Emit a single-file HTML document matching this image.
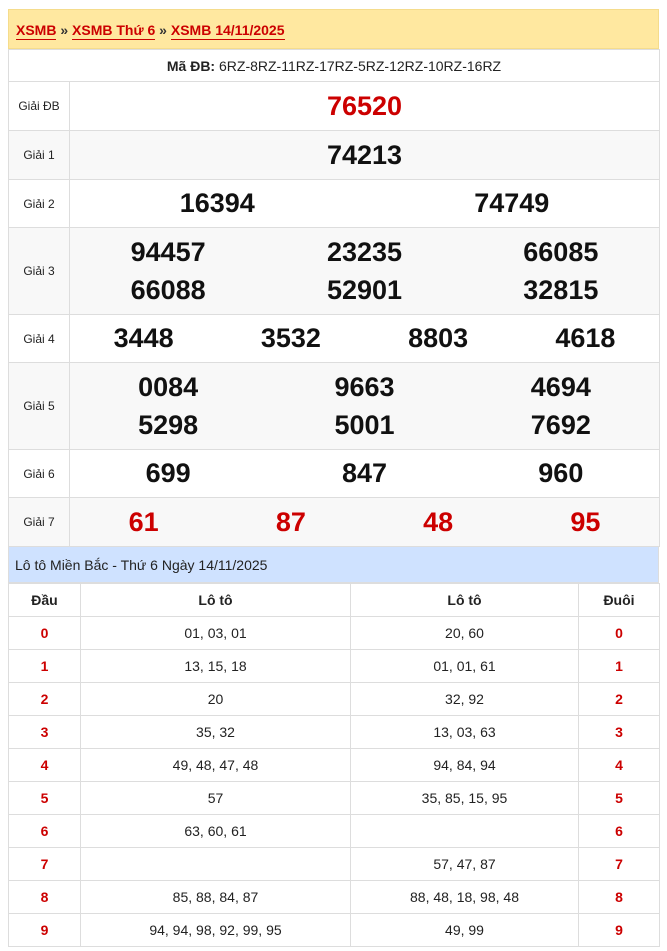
<!DOCTYPE html>
<html><head><meta charset="utf-8"><style>
body{margin:0;background:#fff;font-family:"Liberation Sans",Arial,sans-serif;}
.wrap{position:absolute;left:8px;top:9px;width:651px;}
.hd{height:40px;background:#ffe8a0;border:1px solid #f5dc8c;box-sizing:border-box;padding:0 7px;font-size:14px;font-weight:bold;line-height:40px;color:#333}
.hd a{color:#c00;text-decoration:none;border-bottom:1px solid #c00;padding-bottom:1px}
table{border-collapse:collapse;width:651px;table-layout:fixed}
td,th{border:1px solid #ddd;padding:0;text-align:center}
.ma{height:31px;font-size:14px;color:#222}
.lb{font-size:12px;color:#222}
.n{font-weight:bold;font-size:27px;color:#111}
.r{color:#c00}
.g{background:#f8f8f8}
.row{display:flex}
.row div{flex:1;text-align:center}
.lt{height:36px;background:#cfe2ff;font-size:14px;line-height:36px;padding-left:6px;color:#222;border:1px solid #ddd;border-top:none;box-sizing:border-box}
.t2 td,.t2 th{height:32px;font-size:14px;color:#222}
.t2 th{font-weight:bold}
.t2 .d{color:#c00;font-weight:bold}
</style></head><body><div class="wrap">
<div class="hd"><a>XSMB</a> » <a>XSMB Thứ 6</a> » <a>XSMB 14/11/2025</a></div>
<table>
<colgroup><col style="width:61px"><col style="width:590px"></colgroup>
<tr><td colspan="2" class="ma"><b>Mã ĐB:</b> 6RZ-8RZ-11RZ-17RZ-5RZ-12RZ-10RZ-16RZ</td></tr>
<tr style="height:49px"><td class="lb">Giải ĐB</td><td class="n r">76520</td></tr>
<tr style="height:49px" class="g"><td class="lb">Giải 1</td><td class="n">74213</td></tr>
<tr style="height:48px"><td class="lb">Giải 2</td><td class="n"><div class="row"><div>16394</div><div>74749</div></div></td></tr>
<tr style="height:87px" class="g"><td class="lb">Giải 3</td><td class="n"><div class="row" style="line-height:38px"><div>94457<br>66088</div><div>23235<br>52901</div><div>66085<br>32815</div></div></td></tr>
<tr style="height:48px"><td class="lb">Giải 4</td><td class="n"><div class="row"><div>3448</div><div>3532</div><div>8803</div><div>4618</div></div></td></tr>
<tr style="height:87px" class="g"><td class="lb">Giải 5</td><td class="n"><div class="row" style="line-height:38px"><div>0084<br>5298</div><div>9663<br>5001</div><div>4694<br>7692</div></div></td></tr>
<tr style="height:48px"><td class="lb">Giải 6</td><td class="n"><div class="row"><div>699</div><div>847</div><div>960</div></div></td></tr>
<tr style="height:49px" class="g"><td class="lb">Giải 7</td><td class="n r"><div class="row"><div>61</div><div>87</div><div>48</div><div>95</div></div></td></tr>
</table>
<div class="lt">Lô tô Miền Bắc - Thứ 6 Ngày 14/11/2025</div>
<table class="t2">
<colgroup><col style="width:72px"><col style="width:270px"><col style="width:228px"><col style="width:81px"></colgroup>
<tr><th>Đầu</th><th>Lô tô</th><th>Lô tô</th><th>Đuôi</th></tr>
<tr><td class="d">0</td><td>01, 03, 01</td><td>20, 60</td><td class="d">0</td></tr>
<tr><td class="d">1</td><td>13, 15, 18</td><td>01, 01, 61</td><td class="d">1</td></tr>
<tr><td class="d">2</td><td>20</td><td>32, 92</td><td class="d">2</td></tr>
<tr><td class="d">3</td><td>35, 32</td><td>13, 03, 63</td><td class="d">3</td></tr>
<tr><td class="d">4</td><td>49, 48, 47, 48</td><td>94, 84, 94</td><td class="d">4</td></tr>
<tr><td class="d">5</td><td>57</td><td>35, 85, 15, 95</td><td class="d">5</td></tr>
<tr><td class="d">6</td><td>63, 60, 61</td><td></td><td class="d">6</td></tr>
<tr><td class="d">7</td><td></td><td>57, 47, 87</td><td class="d">7</td></tr>
<tr><td class="d">8</td><td>85, 88, 84, 87</td><td>88, 48, 18, 98, 48</td><td class="d">8</td></tr>
<tr><td class="d">9</td><td>94, 94, 98, 92, 99, 95</td><td>49, 99</td><td class="d">9</td></tr>
</table>
</div></body></html>
